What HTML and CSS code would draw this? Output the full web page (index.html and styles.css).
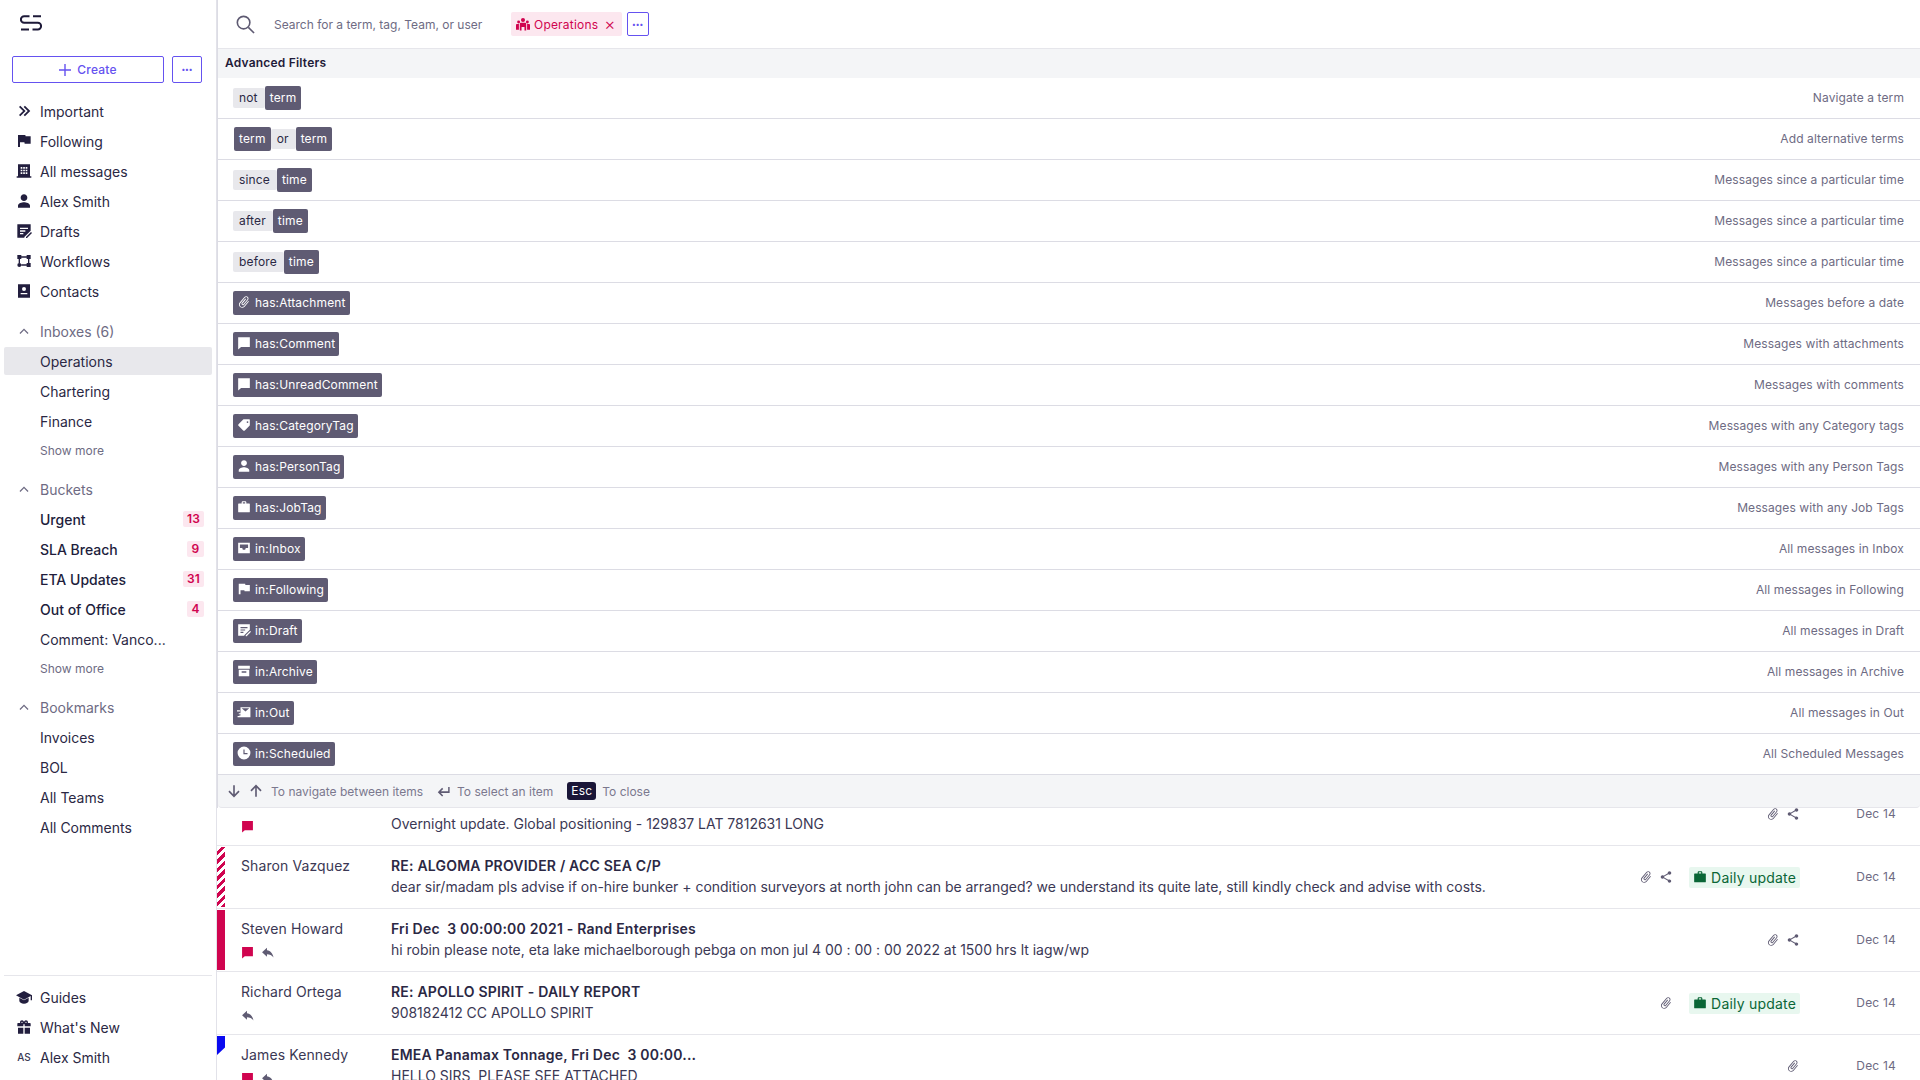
FILE: index.html
```html
<!DOCTYPE html>
<html lang="en">
<head>
  <meta charset="UTF-8" />
  <title>Operations - Search</title>
  <link rel="stylesheet" href="styles.css">
</head>
<body>
  <svg class="sprite" xmlns="http://www.w3.org/2000/svg">
    <symbol id="i-important" viewBox="0 0 24 24"><path d="M6.400 4 4.500 5.900 10.600 12l-6.100 6.100L6.400 20l8-8zM13.400 4l-1.900 1.900 6.100 6.100-6.100 6.100 1.900 1.900 8-8z"/></symbol>
    <symbol id="i-flag" viewBox="0 0 24 24"><path d="M14.400 5 14 3H3v18h3v-7h6.600l.4 2h9V5z"/></symbol>
    <symbol id="i-building" viewBox="0 0 24 24"><path fill-rule="evenodd" d="M3 2h18v18h2v2H1v-2h2zM7 6v2.500h2.500V6zM10.800 6v2.500h2.500V6zM14.500 6v2.500H17V6zM7 10v2.500h2.500V10zM10.800 10v2.500h2.500V10zM14.500 10v2.500H17V10zM7 14v2.500h2.500V14zM10.800 14v2.500h2.500V14zM14.500 14v2.500H17V14z"/></symbol>
    <symbol id="i-person" viewBox="0 0 24 24"><path d="M12 12c2.760 0 5-2.240 5-5s-2.240-5-5-5-5 2.240-5 5 2.240 5 5 5zm0 2c-3.300 0-9 1.700-9 5v3h18v-3c0-3.300-5.700-5-9-5z"/></symbol>
    <symbol id="i-draft" viewBox="0 0 24 24"><path fill-rule="evenodd" d="M2 2h20v9.500l-9.500 9.500V22H2zM6 7v2h12V7zM6 11v2h8v-2zM6 15v2h5v-2z"/><path d="M22.500 13.500l1.500 1.500-7.500 7.500H15V21z"/></symbol>
    <symbol id="i-workflow" viewBox="0 0 24 24"><path d="M2 3h6v6H2zM16 3h6v6h-6zM16 15h6v6h-6zM5 15a3 3 0 1 1 0 6 3 3 0 0 1 0-6zM8 5h8v2H8zM4 9h2v6H4zM18 9h2v6h-2zM8 17h8v2H8z"/></symbol>
    <symbol id="i-contacts" viewBox="0 0 24 24"><path fill-rule="evenodd" d="M3 2h18v20H3zM12 6a3 3 0 1 0 0 6 3 3 0 0 0 0-6zM7 15v2h10v-2z"/></symbol>
    <symbol id="i-chevron" viewBox="0 0 24 24"><path d="M12 7 3 16l1.800 1.800L12 10.600l7.200 7.200L21 16z"/></symbol>
    <symbol id="i-school" viewBox="0 0 24 24"><path d="M5 13.200v4.300c0 2.400 3.200 4.500 7 4.500s7-2.100 7-4.500v-4.300L12 17zM12 3 0 9.500 12 16l10-5.400V17h2V9.500z"/></symbol>
    <symbol id="i-gift" viewBox="0 0 24 24"><path d="M21 6h-3.200c.1-.3.200-.7.200-1 0-1.700-1.300-3-3-3-1.100 0-2 .5-2.500 1.400L12 4l-.5-.6C11 2.500 10.100 2 9 2 7.300 2 6 3.300 6 5c0 .3.100.7.200 1H3c-.6 0-1 .4-1 1v4h9V8h2v3h9V7c0-.6-.4-1-1-1zM9 6c-.6 0-1-.4-1-1s.4-1 1-1 1 .4 1 1-.4 1-1 1zm6 0c-.6 0-1-.4-1-1s.4-1 1-1 1 .4 1 1-.4 1-1 1zM3 13h8v9H3zM13 13h8v9h-8z"/></symbol>
    <symbol id="i-comment" viewBox="0 0 24 24"><path d="M2 2h20v17H7l-5 4z"/></symbol>
    <symbol id="i-reply" viewBox="0 0 24 24"><path d="M11 8V3L2 11.500 11 20v-5c5 0 9 1.500 12 6-1-6-5-12-12-13z"/></symbol>
    <symbol id="i-attach" viewBox="0 0 24 24"><path transform="rotate(40 12 12)" d="M16.500 6v11.500c0 2.210-1.790 4-4 4s-4-1.790-4-4V5c0-1.380 1.120-2.500 2.500-2.500s2.500 1.120 2.500 2.500v10.500c0 .55-.45 1-1 1s-1-.45-1-1V6H10v9.500c0 1.380 1.120 2.500 2.500 2.500s2.500-1.120 2.500-2.500V5c0-2.210-1.790-4-4-4S7 2.790 7 5v12.500c0 3.040 2.460 5.500 5.500 5.500s5.500-2.460 5.500-5.500V6h-1.500z"/></symbol>
    <symbol id="i-share" viewBox="0 0 24 24"><path d="M18 16.100c-.8 0-1.400.3-2 .8l-7.100-4.200c.1-.2.100-.5.100-.7s0-.5-.1-.7L16 7.200c.5.500 1.200.8 2 .8 1.700 0 3-1.300 3-3s-1.300-3-3-3-3 1.300-3 3c0 .2 0 .5.100.7L8 9.800C7.500 9.300 6.800 9 6 9c-1.700 0-3 1.300-3 3s1.300 3 3 3c.8 0 1.500-.3 2-.8l7.200 4.200c-.1.200-.1.400-.1.600 0 1.600 1.300 2.900 2.900 2.900s2.900-1.300 2.900-2.900-1.300-2.900-2.900-2.900z"/></symbol>
    <symbol id="i-job" viewBox="0 0 24 24"><path fill-rule="evenodd" d="M8 6V4c0-1.100.9-2 2-2h4c1.100 0 2 .9 2 2v2h5c.6 0 1 .4 1 1v13c0 .6-.4 1-1 1H3c-.6 0-1-.4-1-1V7c0-.6.4-1 1-1zm2 0h4V4h-4z"/></symbol>
    <symbol id="i-tag" viewBox="0 0 24 24"><path fill-rule="evenodd" d="M12 2h9c.6 0 1 .4 1 1v9c0 .5-.2 1-.6 1.400l-8 8c-.8.8-2 .8-2.800 0l-8-8c-.8-.8-.8-2 0-2.800l8-8c.4-.4.9-.6 1.400-.6zm6 3.500a1.500 1.500 0 1 0 0 3 1.500 1.500 0 0 0 0-3z"/></symbol>
    <symbol id="i-inbox" viewBox="0 0 24 24"><path fill-rule="evenodd" d="M2 3h20v18H2zM5 6v6h4l1 3h4l1-3h4V6z"/></symbol>
    <symbol id="i-archive" viewBox="0 0 24 24"><path fill-rule="evenodd" d="M2 3h20v5H2zM3 10h18v11H3zM8 12.500v2.500h8v-2.500z"/></symbol>
    <symbol id="i-out" viewBox="0 0 24 24"><path fill-rule="evenodd" d="M6 4h17v17H1v-2h3v-1H6v-2H3v-2h3zM8 5.500l6.500 5.500L21 5.500zM0 9h5v2H0z"/></symbol>
    <symbol id="i-clock" viewBox="0 0 24 24"><path fill-rule="evenodd" d="M12 1a11 11 0 1 0 0 22 11 11 0 0 0 0-22zm-1 5v8h7v-2h-5V6z"/></symbol>
    <symbol id="i-team" viewBox="0 0 24 24"><path d="M12 1.500a3.500 3.500 0 1 1 0 7 3.500 3.500 0 0 1 0-7zM4.500 6a2.500 2.500 0 1 1 0 5 2.500 2.500 0 0 1 0-5zM19.500 6a2.500 2.500 0 1 1 0 5 2.500 2.500 0 0 1 0-5zM8 10h8c1 0 1.500.6 1.500 1.500V23h-3v-6h-5v6h-3V11.500C6.500 10.600 7 10 8 10zM0 14c0-1 .7-1.800 1.500-1.800H5V22H0zM24 14c0-1-.7-1.800-1.500-1.800H19V22h5z"/></symbol>
    <symbol id="i-down" viewBox="0 0 24 24"><path d="M10.600 2h2.800v15.500l6.200-6.200 2 2L12 23 2.400 13.300l2-2 6.200 6.200z"/></symbol>
    <symbol id="i-up" viewBox="0 0 24 24"><path d="M10.600 22h2.800V6.500l6.200 6.200 2-2L12 1 2.400 10.700l2 2 6.200-6.200z"/></symbol>
    <symbol id="i-return" viewBox="0 0 24 24"><path d="M20 5h2.500v10.500H7.500l4 4-1.900 1.900-7.400-7.400 7.400-7.400 1.900 1.900-4 4H20z"/></symbol>
    <symbol id="i-plus" viewBox="0 0 12 12"><path d="M5.300 0h1.400v5.300H12v1.400H6.700V12H5.300V6.700H0V5.300h5.300z"/></symbol>
  </svg>

  <div class="app">
    <aside class="sidebar">
      <svg class="logo" viewBox="0 0 22 16" stroke="#1d1938" stroke-width="2">
        <path d="M9.500 1.200H4.200a3.300 3.300 0 0 0 0 6.600h13.600a3.300 3.300 0 0 1 0 6.600h-5.300"/>
        <path d="M13 1.200h8M1 14.400h8"/>
      </svg>

      <div class="create-row">
        <button class="btn btn-create"><svg class="plus"><use href="#i-plus"/></svg>Create</button>
        <button class="btn btn-more">&bull;&bull;&bull;</button>
      </div>

      <nav class="nav">
        <a class="nav-item"><svg class="icon"><use href="#i-important"/></svg>Important</a>
        <a class="nav-item"><svg class="icon"><use href="#i-flag"/></svg>Following</a>
        <a class="nav-item"><svg class="icon"><use href="#i-building"/></svg>All messages</a>
        <a class="nav-item"><svg class="icon"><use href="#i-person"/></svg>Alex Smith</a>
        <a class="nav-item"><svg class="icon"><use href="#i-draft"/></svg>Drafts</a>
        <a class="nav-item"><svg class="icon"><use href="#i-workflow"/></svg>Workflows</a>
        <a class="nav-item"><svg class="icon"><use href="#i-contacts"/></svg>Contacts</a>
      </nav>

      <section class="nav-section">
        <div class="section-head"><svg class="chevron"><use href="#i-chevron"/></svg>Inboxes (6)</div>
        <a class="sub-item active">Operations</a>
        <a class="sub-item">Chartering</a>
        <a class="sub-item">Finance</a>
        <a class="show-more">Show more</a>
      </section>

      <section class="nav-section">
        <div class="section-head"><svg class="chevron"><use href="#i-chevron"/></svg>Buckets</div>
        <a class="sub-item unread">Urgent<span class="badge">13</span></a>
        <a class="sub-item unread">SLA Breach<span class="badge">9</span></a>
        <a class="sub-item unread">ETA Updates<span class="badge">31</span></a>
        <a class="sub-item unread">Out of Office<span class="badge">4</span></a>
        <a class="sub-item">Comment: Vanco...</a>
        <a class="show-more">Show more</a>
      </section>

      <section class="nav-section">
        <div class="section-head"><svg class="chevron"><use href="#i-chevron"/></svg>Bookmarks</div>
        <a class="sub-item">Invoices</a>
        <a class="sub-item">BOL</a>
        <a class="sub-item">All Teams</a>
        <a class="sub-item">All Comments</a>
      </section>

      <div class="sidebar-foot">
        <a class="nav-item"><svg class="icon"><use href="#i-school"/></svg>Guides</a>
        <a class="nav-item"><svg class="icon"><use href="#i-gift"/></svg>What's New</a>
        <a class="nav-item"><span class="initials">AS</span>Alex Smith</a>
      </div>
    </aside>

    <main class="main">
      <div class="search-panel">
        <div class="search-bar">
          <svg class="search-icon" viewBox="0 0 20 20" stroke="#5e5a72" stroke-width="1.700">
            <circle cx="8" cy="8" r="6.600"/><path d="M13 13l6 6"/>
          </svg>
          <span class="search-hint">Search for a term, tag, Team, or user</span>
          <span class="scope-chip"><svg class="icon-sm"><use href="#i-team"/></svg>Operations<span class="scope-x">&times;</span></span>
          <button class="btn btn-scope-more">&bull;&bull;&bull;</button>
        </div>

        <div class="filters-title">Advanced Filters</div>

        <ul class="filters">
          <li class="filter"><span class="tokens"><span class="kw">not</span><span class="val">term</span></span><span class="filter-desc">Navigate a term</span></li>
          <li class="filter"><span class="tokens shift"><span class="val">term</span><span class="kw">or</span><span class="val">term</span></span><span class="filter-desc">Add alternative terms</span></li>
          <li class="filter"><span class="tokens"><span class="kw">since</span><span class="val">time</span></span><span class="filter-desc">Messages since a particular time</span></li>
          <li class="filter"><span class="tokens"><span class="kw">after</span><span class="val">time</span></span><span class="filter-desc">Messages since a particular time</span></li>
          <li class="filter"><span class="tokens"><span class="kw">before</span><span class="val">time</span></span><span class="filter-desc">Messages since a particular time</span></li>
          <li class="filter"><span class="val has-icon"><svg class="icon-sm"><use href="#i-attach"/></svg>has:Attachment</span><span class="filter-desc">Messages before a date</span></li>
          <li class="filter"><span class="val has-icon"><svg class="icon-sm"><use href="#i-comment"/></svg>has:Comment</span><span class="filter-desc">Messages with attachments</span></li>
          <li class="filter"><span class="val has-icon"><svg class="icon-sm"><use href="#i-comment"/></svg>has:UnreadComment</span><span class="filter-desc">Messages with comments</span></li>
          <li class="filter"><span class="val has-icon"><svg class="icon-sm"><use href="#i-tag"/></svg>has:CategoryTag</span><span class="filter-desc">Messages with any Category tags</span></li>
          <li class="filter"><span class="val has-icon"><svg class="icon-sm"><use href="#i-person"/></svg>has:PersonTag</span><span class="filter-desc">Messages with any Person Tags</span></li>
          <li class="filter"><span class="val has-icon"><svg class="icon-sm"><use href="#i-job"/></svg>has:JobTag</span><span class="filter-desc">Messages with any Job Tags</span></li>
          <li class="filter"><span class="val has-icon"><svg class="icon-sm"><use href="#i-inbox"/></svg>in:Inbox</span><span class="filter-desc">All messages in Inbox</span></li>
          <li class="filter"><span class="val has-icon"><svg class="icon-sm"><use href="#i-flag"/></svg>in:Following</span><span class="filter-desc">All messages in Following</span></li>
          <li class="filter"><span class="val has-icon"><svg class="icon-sm"><use href="#i-draft"/></svg>in:Draft</span><span class="filter-desc">All messages in Draft</span></li>
          <li class="filter"><span class="val has-icon"><svg class="icon-sm"><use href="#i-archive"/></svg>in:Archive</span><span class="filter-desc">All messages in Archive</span></li>
          <li class="filter"><span class="val has-icon"><svg class="icon-sm"><use href="#i-out"/></svg>in:Out</span><span class="filter-desc">All messages in Out</span></li>
          <li class="filter"><span class="val has-icon"><svg class="icon-sm"><use href="#i-clock"/></svg>in:Scheduled</span><span class="filter-desc">All Scheduled Messages</span></li>
        </ul>

        <div class="key-hints">
          <svg class="key-icon"><use href="#i-down"/></svg>
          <svg class="key-icon key-up"><use href="#i-up"/></svg>
          <span class="hint">To navigate between items</span>
          <svg class="key-icon key-return"><use href="#i-return"/></svg>
          <span class="hint">To select an item</span>
          <kbd class="esc">Esc</kbd>
          <span class="hint hint-close">To close</span>
        </div>
      </div>

      <div class="messages">
        <div class="message">
          <span class="bar"></span>
          <div class="sender">&nbsp;<div class="flags"><svg class="flag-comment"><use href="#i-comment"/></svg></div></div>
          <div class="body"><div class="subject">&nbsp;</div><div class="preview">Overnight update. Global positioning - 129837 LAT 7812631 LONG</div></div>
          <div class="meta"><svg class="meta-icon"><use href="#i-attach"/></svg><svg class="meta-icon"><use href="#i-share"/></svg></div>
          <div class="date">Dec 14</div>
        </div>

        <div class="message">
          <span class="bar bar-striped"></span>
          <div class="sender">Sharon Vazquez</div>
          <div class="body"><div class="subject">RE: ALGOMA PROVIDER / ACC SEA C/P</div><div class="preview">dear sir/madam pls advise if on-hire bunker + condition surveyors at north john can be arranged? we understand its quite late, still kindly check and advise with costs.</div></div>
          <div class="meta"><svg class="meta-icon"><use href="#i-attach"/></svg><svg class="meta-icon"><use href="#i-share"/></svg><span class="job-tag"><svg class="icon-sm"><use href="#i-job"/></svg>Daily update</span></div>
          <div class="date">Dec 14</div>
        </div>

        <div class="message">
          <span class="bar bar-solid"></span>
          <div class="sender">Steven Howard<div class="flags"><svg class="flag-comment"><use href="#i-comment"/></svg><svg class="flag-reply"><use href="#i-reply"/></svg></div></div>
          <div class="body"><div class="subject">Fri Dec&nbsp; 3 00:00:00 2021 - Rand Enterprises</div><div class="preview">hi robin please note, eta lake michaelborough pebga on mon jul 4 00 : 00 : 00 2022 at 1500 hrs lt iagw/wp</div></div>
          <div class="meta"><svg class="meta-icon"><use href="#i-attach"/></svg><svg class="meta-icon"><use href="#i-share"/></svg></div>
          <div class="date">Dec 14</div>
        </div>

        <div class="message">
          <span class="bar"></span>
          <div class="sender">Richard Ortega<div class="flags"><svg class="flag-reply"><use href="#i-reply"/></svg></div></div>
          <div class="body"><div class="subject">RE: APOLLO SPIRIT - DAILY REPORT</div><div class="preview">908182412 CC APOLLO SPIRIT</div></div>
          <div class="meta"><svg class="meta-icon"><use href="#i-attach"/></svg><span class="job-tag"><svg class="icon-sm"><use href="#i-job"/></svg>Daily update</span></div>
          <div class="date">Dec 14</div>
        </div>

        <div class="message">
          <span class="bar bar-blue"></span>
          <div class="sender">James Kennedy<div class="flags"><svg class="flag-comment"><use href="#i-comment"/></svg><svg class="flag-reply"><use href="#i-reply"/></svg></div></div>
          <div class="body"><div class="subject">EMEA Panamax Tonnage, Fri Dec&nbsp; 3 00:00...</div><div class="preview">HELLO SIRS, PLEASE SEE ATTACHED</div></div>
          <div class="meta"><svg class="meta-icon"><use href="#i-attach"/></svg></div>
          <div class="date">Dec 14</div>
        </div>
      </div>
    </main>
  </div>
</body>
</html>
```

FILE: styles.css
```css
* {
  box-sizing: border-box;
}

body {
  margin: 0;
  font-family: Inter, "Liberation Sans", sans-serif;
  font-size: 14px;
  color: #2b2844;
  background-color: #ffffff;
  overflow: hidden;
}

.sprite {
  display: none;
}

svg {
  fill: currentColor;
}

.app {
  display: flex;
  height: 100vh;
}

/* sidebar */

.sidebar {
  width: 217px;
  flex-shrink: 0;
  display: flex;
  flex-direction: column;
  border-right: 1px solid #e2e2e9;
  padding-top: 15px;
}

.logo {
  display: block;
  width: 22px;
  height: 16px;
  margin-left: 20px;
  fill: none;
}

.create-row {
  display: flex;
  gap: 8px;
  margin: 25px 14px 13px 12px;
}

.btn {
  display: flex;
  align-items: center;
  justify-content: center;
  height: 27px;
  padding: 0;
  border: 1px solid #6552f0;
  border-radius: 2px;
  background: #ffffff;
  color: #6552f0;
  font-family: inherit;
  font-size: 12px;
  font-weight: 500;
  letter-spacing: 0.2px;
}

.btn-create {
  flex: 1;
}

.plus {
  width: 12px;
  height: 12px;
  margin-right: 6px;
}

.btn-more {
  width: 30px;
  font-size: 7px;
  letter-spacing: 0;
}

.nav-item {
  display: flex;
  align-items: center;
  gap: 8px;
  height: 30px;
  padding-left: 16px;
}

.icon {
  width: 16px;
  height: 16px;
  flex-shrink: 0;
  color: #221e3e;
}

.initials {
  width: 16px;
  font-size: 10px;
  font-weight: 500;
  text-align: center;
  color: #3b3854;
}

.nav-section {
  margin-top: 10px;
}

.section-head {
  display: flex;
  align-items: center;
  gap: 8px;
  height: 30px;
  padding-left: 16px;
  color: #6e6b83;
}

.chevron {
  width: 16px;
  height: 16px;
  padding: 2px;
  color: #6e6b83;
}

.sub-item {
  display: flex;
  align-items: center;
  justify-content: space-between;
  height: 30px;
  padding: 0 12px 0 40px;
}

.sub-item.active {
  height: 28px;
  margin: 1px 4px;
  padding-left: 36px;
  border-radius: 2px;
  background-color: #e8e8ec;
}

.sub-item.unread {
  font-weight: 500;
  color: #211d3c;
}

.badge {
  min-width: 17px;
  height: 16px;
  padding: 0 4px;
  border-radius: 2px;
  background-color: #fce7ef;
  color: #d0044f;
  font-size: 12px;
  font-weight: 600;
  line-height: 16px;
  letter-spacing: 0.2px;
  text-align: center;
}

.show-more {
  display: flex;
  align-items: center;
  height: 28px;
  padding-left: 40px;
  font-size: 12px;
  color: #6e6b83;
}

.sidebar-foot {
  margin: auto 4px 8px 0;
  padding-top: 7px;
  position: relative;
}

.sidebar-foot::before {
  content: "";
  position: absolute;
  top: 0;
  left: 4px;
  right: 0;
  height: 1px;
  background-color: #e6e6eb;
}

/* search panel sits over the message list */

.main {
  position: relative;
  flex: 1;
  min-width: 0;
  overflow: hidden;
}

.search-panel {
  position: absolute;
  top: 0;
  left: 0;
  right: 0;
  z-index: 2;
  background-color: #ffffff;
  border-left: 1px solid #dcdce4;
}

.search-bar {
  display: flex;
  align-items: center;
  height: 48px;
  padding-left: 18px;
}

.search-icon {
  width: 19px;
  height: 19px;
  fill: none;
}

.search-hint {
  margin-left: 19px;
  width: 237px;
  font-size: 12px;
  color: #6e6b83;
}

.scope-chip {
  display: flex;
  align-items: center;
  height: 24px;
  padding: 0 6px 0 5px;
  border-radius: 2px;
  background-color: #fce7ef;
  color: #d0044f;
  font-size: 12px;
  letter-spacing: 0.2px;
}

.icon-sm {
  width: 14px;
  height: 14px;
  flex-shrink: 0;
  margin-right: 4px;
}

.scope-x {
  margin-left: 6px;
  font-size: 17px;
  font-weight: 300;
  line-height: 14px;
}

.btn-scope-more {
  width: 22px;
  height: 24px;
  margin-left: 5px;
  font-size: 7px;
  letter-spacing: 0;
}

.filters-title {
  height: 30px;
  padding: 0 7px;
  border-top: 1px solid #e6e6eb;
  background-color: #f4f5f7;
  font-size: 12px;
  font-weight: 600;
  line-height: 27px;
  letter-spacing: 0.2px;
  color: #1f1b39;
}

.filters {
  margin: 0;
  padding: 0;
  list-style: none;
}

.filter {
  display: flex;
  align-items: center;
  justify-content: space-between;
  height: 41px;
  padding: 0 16px 0 15px;
  border-bottom: 1px solid #dcdce4;
}

.tokens {
  display: flex;
  align-items: center;
}

.tokens.shift {
  margin-left: 1px;
}

.kw,
.val {
  display: inline-flex;
  align-items: center;
  font-size: 12px;
  letter-spacing: 0.15px;
  padding-bottom: 2px;
}

.kw {
  height: 20px;
  padding-left: 6px;
  padding-right: 7px;
  background-color: #e8e8ec;
  border-radius: 2px;
  color: #2b2844;
}

.val {
  height: 24px;
  padding-left: 5px;
  padding-right: 5px;
  border-radius: 2px;
  background-color: #5f5b73;
  color: #ffffff;
}

.val.has-icon {
  padding-left: 4px;
  padding-right: 4px;
}

.filter-desc {
  margin-bottom: 2px;
  font-size: 12px;
  letter-spacing: 0.1px;
  color: #6e6b83;
}

.key-hints {
  display: flex;
  align-items: center;
  height: 33px;
  padding-left: 9px;
  border-bottom: 1px solid #e6e6eb;
  border-radius: 0 0 4px 4px;
  background-color: #f4f5f7;
  color: #5f5b73;
}

.key-icon {
  width: 14px;
  height: 14px;
}

.key-up {
  margin-left: 8px;
}

.key-return {
  width: 15px;
  margin-left: 13px;
}

.hint {
  margin-left: 8px;
  font-size: 12px;
  color: #7b788e;
}

.key-return + .hint {
  margin-left: 6px;
}

.esc {
  margin-left: 14px;
  padding: 0 4px;
  height: 18px;
  border-radius: 3px;
  background-color: #1a1638;
  color: #ffffff;
  font-family: inherit;
  font-size: 12px;
  line-height: 18px;
  letter-spacing: 0.2px;
}

.hint-close {
  margin-left: 6px;
}

/* message list */

.messages {
  padding-top: 783px;
}

.message {
  display: flex;
  height: 63px;
  padding-right: 24px;
  border-bottom: 1px solid #e6e6eb;
}

.message:last-child {
  border-bottom: 0;
}

.bar {
  width: 8px;
  height: 60px;
  margin-top: 1px;
  flex-shrink: 0;
}

.bar-striped {
  background: repeating-linear-gradient(-45deg, #d0044f 0 3px, #ffffff 3px 6px);
}

.bar-solid {
  background-color: #d0044f;
}

.bar-blue {
  height: 19px;
  background-color: #0a0af0;
  clip-path: polygon(0 0, 100% 0, 100% 60%, 0 100%);
}

.sender {
  width: 150px;
  margin-left: 16px;
  padding-top: 9px;
  line-height: 21px;
  letter-spacing: 0.1px;
  color: #3b3854;
  flex-shrink: 0;
}

.flags {
  display: flex;
  align-items: center;
  gap: 7px;
  height: 16px;
  margin-top: 5px;
}

.flag-comment {
  width: 13px;
  height: 13px;
  color: #d0044f;
}

.flag-reply {
  width: 13px;
  height: 13px;
  color: #5f5b73;
}

.body {
  flex: 1;
  min-width: 0;
  padding-top: 9px;
  line-height: 21px;
}

.subject {
  font-weight: 600;
  letter-spacing: 0.2px;
  color: #2b2844;
}

.preview {
  white-space: nowrap;
  letter-spacing: -0.02px;
  color: #3b3854;
}

.meta {
  display: flex;
  align-items: center;
  justify-content: flex-end;
  gap: 6px;
  flex-shrink: 0;
  height: 62px;
}

.meta-icon {
  width: 14px;
  height: 14px;
  color: #5f5b73;
}

.job-tag {
  display: flex;
  align-items: center;
  height: 21px;
  margin-left: 10px;
  padding: 0 4px;
  border-radius: 2px;
  background-color: #e8f7ef;
  color: #0a6636;
  font-size: 14px;
  letter-spacing: 0.2px;
}

.date {
  width: 96px;
  flex-shrink: 0;
  height: 62px;
  font-size: 12px;
  line-height: 62px;
  letter-spacing: 0.2px;
  text-align: right;
  color: #6e6b83;
}
```
